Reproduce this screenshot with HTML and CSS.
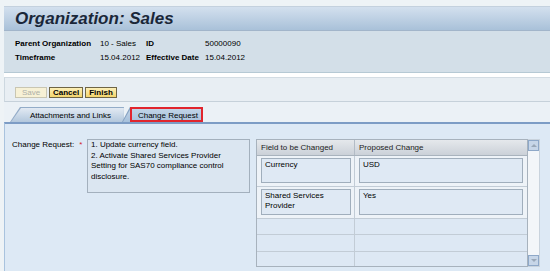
FILE: index.html
```html
<!DOCTYPE html>
<html>
<head>
<meta charset="utf-8">
<link rel="stylesheet" href="styles.css">
</head>
<body>
<div class="page">
  <div class="title-band"><h1 class="title">Organization: Sales</h1></div>
  <div class="info">
    <span class="b">Parent Organization</span><span>10 - Sales</span><span class="b">ID</span><span>50000090</span>
    <span class="b">Timeframe</span><span>15.04.2012</span><span class="b">Effective Date</span><span>15.04.2012</span>
  </div>
  <div class="gap"></div>
  <div class="toolbar">
    <span class="btn btn-dis">Save</span>
    <span class="btn">Cancel</span>
    <span class="btn">Finish</span>
  </div>
  <div class="tabstrip">
    <div class="tab tab-attach"><div class="tab-in">Attachments and Links</div></div>
    <div class="tab-wrap">
      <div class="tab tab-sel"><div class="tab-in">Change Request</div></div>
      <div class="hl"></div>
    </div>
  </div>
  <div class="content">
    <div class="lbl">Change Request:<span class="req">*</span></div>
    <div class="ta">1. Update currency field.<br>2. Activate Shared Services Provider<br>Setting for SAS70 compliance control<br>disclosure.</div>
    <div class="tblwrap">
      <div class="tbl">
        <div class="th"><div class="c">Field to be Changed</div><div class="c">Proposed Change</div></div>
        <div class="row filled r1"><div class="c"><div class="inp">Currency</div></div><div class="c"><div class="inp">USD</div></div></div>
        <div class="row filled r2"><div class="c"><div class="inp">Shared Services Provider</div></div><div class="c"><div class="inp">Yes</div></div></div>
        <div class="row e14"><div class="c"></div><div class="c"></div></div>
        <div class="row e15"><div class="c"></div><div class="c"></div></div>
        <div class="row e14 last"><div class="c"></div><div class="c"></div></div>
      </div>
      <div class="sb">
        <div class="sbtn"><span class="up"></span></div>
        <div class="sbtn"><span class="down"></span></div>
      </div>
    </div>
  </div>
</div>
</body>
</html>
```
FILE: styles.css
```css
html, body { margin: 0; height: 271px; overflow: hidden; }
body {
  background: #eef3f6;
  font-family: "Liberation Sans", Arial, sans-serif;
  font-size: 8px;
  color: #000;
}
.page { padding: 6px 0 0 4px; }

.title-band {
  height: 23px;
  border-top: 1px solid #c4d1de;
  border-bottom: 1px solid #a2b5ca;
  background: linear-gradient(#d3e0ee, #a9c1d9);
  display: flex;
  align-items: center;
  padding-left: 11px;
}
.title {
  margin: 0;
  font-size: 17px;
  font-weight: bold;
  font-style: italic;
  color: #1a2739;
  line-height: 1;
}

.info {
  background: #d3dfe8;
  border-bottom: 1px solid #b6c9d4;
  padding: 6px 0 7px 11px;
  display: grid;
  grid-template-columns: 85px 46px 59px auto;
  line-height: 14px;
}
.b { font-weight: bold; }

.gap { height: 4px; background: #fff; }

.toolbar {
  border-top: 1px solid #d3dce3;
  border-bottom: 1px solid #c6d1da;
  border-left: 1px solid #cdd8e0;
  background: #e8eef3;
  padding: 9px 0 3px 10px;
  display: flex;
  gap: 2px;
}
.btn {
  height: 11px;
  box-sizing: border-box;
  border: 1px solid #6f6545;
  background: linear-gradient(#fcefb8, #f3d56c);
  font-weight: bold;
  line-height: 9px;
  padding: 0 3px;
}
.btn-dis {
  width: 32px;
  text-align: center;
  font-weight: normal;
  border-color: #c9c6b2;
  background: #f7f1d6;
  color: #aeb0a8;
}

.tabstrip {
  height: 20px;
  background: #ebf1f6;
  display: flex;
  align-items: flex-end;
  padding-left: 6px;
}
.tab {
  height: 15px;
  box-sizing: border-box;
  padding: 1px 0 0 1px;
  background: #93acc8;
  clip-path: polygon(10px 0, 100% 0, 100% 100%, 0 100%);
}
.tab-in {
  height: 100%;
  box-sizing: border-box;
  display: flex;
  align-items: center;
  background: linear-gradient(#e2eaf3, #b2c7dc);
  clip-path: polygon(10px 0, 100% 0, 100% 100%, 0 100%);
  padding: 1px 13px 0 19px;
  white-space: nowrap;
}
.tab-wrap { position: relative; margin-left: -2px; }
.tab-sel { clip-path: polygon(8px 0, 100% 0, 100% 100%, 0 100%); background: #86a2c2; }
.tab-sel .tab-in {
  clip-path: polygon(8px 0, 100% 0, 100% 100%, 0 100%);
  background: linear-gradient(#c3d5e8, #a6c0db);
  padding: 1px 5px 0 15px;
}
.hl {
  position: absolute;
  left: 8px; top: 0; right: 0; bottom: 0;
  border: 2px solid #e1252d;
}

.content {
  border-top: 2px solid #7c9cc5;
  border-left: 1px solid #a9c3de;
  background: #dde9f5;
  padding: 15px 0 0 7px;
  height: 132px;
  display: flex;
  align-items: flex-start;
}
.lbl {
  width: 75px;
  padding-top: 1px;
  line-height: 10.5px;
  white-space: nowrap;
}
.req { color: #d2232a; margin-left: 5px; }
.ta {
  width: 163px;
  height: 54px;
  box-sizing: border-box;
  border: 1px solid #a3b0bd;
  background: #dbe6f1;
  padding: 0 3px;
  line-height: 10.5px;
  white-space: nowrap;
}

.tblwrap { display: flex; margin-left: 6px; }
.tbl {
  width: 272px;
  box-sizing: border-box;
  border: 1px solid #a7b2bd;
}
.th, .row { display: grid; grid-template-columns: 98px 1fr; }
.th {
  height: 16px;
  box-sizing: border-box;
  border-bottom: 1px solid #a9b3bd;
  background: linear-gradient(#e5e8ec, #cbd1d8);
  line-height: 15px;
  color: #222;
}
.th .c { padding-left: 4px; }
.th .c:first-child { border-right: 1px solid #b3bcc6; }
.row {
  border-bottom: 1px solid #c2ccd6;
  background: #dde8f4;
}
.row .c:first-child { border-right: 1px solid #c2ccd6; }
.row.last { border-bottom: none; }
.r1 { height: 30px; }
.r2 { height: 31px; }
.e14 { height: 15px; }
.e15 { height: 16px; }
.row.last.e14 { height: 14px; }
.filled { background: #eef3f8; }
.filled .c { padding: 2px 4px; }
.filled .c:first-child { padding-right: 3px; }
.inp {
  box-sizing: border-box;
  height: 100%;
  border: 1px solid #a0aebc;
  background: #dfe9f4;
  padding: 1px 3px;
  line-height: 10px;
}
.r1 .inp { height: 25px; }
.r2 .inp { height: 26px; }

.sb {
  width: 12px;
  box-sizing: border-box;
  border: 1px solid #c9d3dd;
  border-left: none;
  background: #f3f6f9;
  display: flex;
  flex-direction: column;
  justify-content: space-between;
}
.sbtn {
  width: 11px;
  height: 11px;
  box-sizing: border-box;
  border: 1px solid #8ea8c8;
  background: #c7d6e8;
  display: flex;
  align-items: center;
  justify-content: center;
}
.up, .down { width: 0; height: 0; border-left: 3px solid transparent; border-right: 3px solid transparent; }
.up { border-bottom: 3px solid #9aa8b8; }
.down { border-top: 3px solid #9aa8b8; }
```
